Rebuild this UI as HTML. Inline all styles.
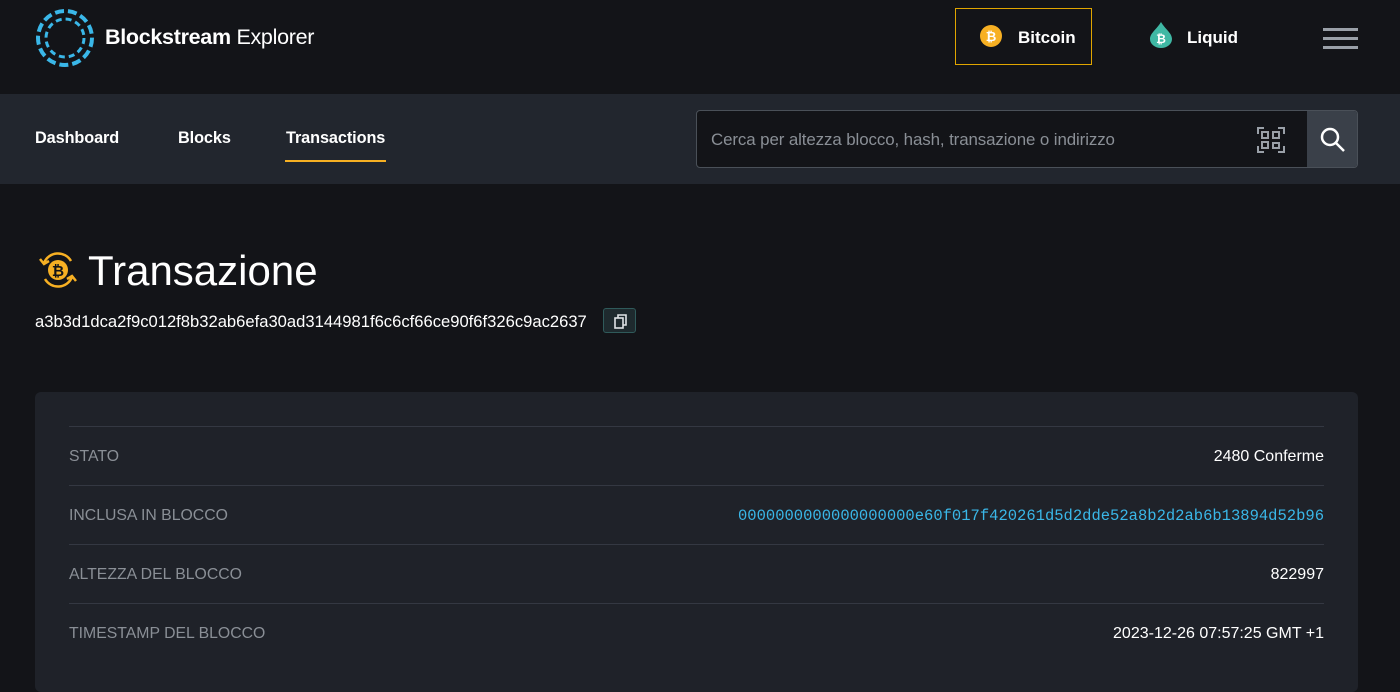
<!DOCTYPE html>
<html><head><meta charset="utf-8"><style>
*{margin:0;padding:0;box-sizing:border-box}
body{width:1400px;height:662px;overflow:hidden;background:#131418;font-family:"Liberation Sans",sans-serif;color:#fff}
.top{height:94px;position:relative;background:#131418}
.logo{position:absolute;left:35px;top:8px}
.brand{position:absolute;left:105px;top:25px;font-size:21.5px;letter-spacing:-0.3px}
.btc{position:absolute;left:955px;top:8px;width:137px;height:57px;border:1.5px solid #e0a500}
.net{position:absolute;font-weight:bold;font-size:17px;top:28px}
.burger{position:absolute;left:1323px;top:28px;width:35px}
.burger div{height:3px;background:#9aa0a8;margin-bottom:6px}
.nav{height:90px;background:#22262e;position:relative}
.nav a{position:absolute;top:35px;font-weight:bold;font-size:16.3px;color:#fff;letter-spacing:-0.1px}
.search{position:absolute;left:696px;top:16px;width:662px;height:58px;border:1px solid #4a5058;border-radius:4px;background:#131418;overflow:hidden}
.search span{position:absolute;left:14px;top:19px;color:#8a8f96;font-size:16.9px;letter-spacing:-0.1px}
.sbtn{position:absolute;right:0;top:0;width:50px;height:58px;background:#3a4049}
h1{position:absolute;left:88px;top:247px;font-size:42px;font-weight:normal}
.hash{position:absolute;left:35px;top:312px;font-size:16.6px}
.copy{position:absolute;left:603px;top:308px;width:33px;height:25px;border:1px solid #2f5a5a;border-radius:3px;background:#1e2a2e}
.card{position:absolute;left:35px;top:392px;width:1323px;height:300px;background:#1f2229;border-radius:6px}
.row{position:absolute;left:34px;width:1255px;height:59px;border-top:1px solid #343842}
.row .k{position:absolute;left:0;top:21px;color:#8a8f96;font-size:15.8px}
.row .v{position:absolute;right:0;top:21px;font-size:16px}
</style></head><body>
<div class="top">
<svg class="logo" width="60" height="60" viewBox="0 0 60 60" fill="none" stroke="#3ab7e8" stroke-width="4" stroke-dasharray="9 4"><circle cx="30" cy="30" r="27"/><circle cx="30" cy="30" r="19" stroke-width="3" stroke-dasharray="6 4"/></svg>
<div class="brand"><b>Blockstream</b> Explorer</div>
<div class="btc"></div>
<svg style="position:absolute;left:980px;top:25px" width="22" height="22"><circle cx="11" cy="11" r="11" fill="#f7b023"/><text x="11" y="16" font-size="13" font-weight="bold" fill="#fff" text-anchor="middle" font-family="Liberation Sans">₿</text></svg>
<div class="net" style="left:1018px">Bitcoin</div>
<svg style="position:absolute;left:1150px;top:22px" width="22" height="26"><path d="M11 0 C15 7 22 11 22 17 A11 9 0 0 1 0 17 C0 11 7 7 11 0Z" fill="#3fb8a4"/><text x="11" y="21" font-size="12" font-weight="bold" fill="#fff" text-anchor="middle" font-family="Liberation Sans">₿</text></svg>
<div class="net" style="left:1187px">Liquid</div>
<div class="burger"><div></div><div></div><div></div></div>
</div>
<div class="nav">
<a style="left:35px">Dashboard</a><a style="left:178px">Blocks</a><a style="left:286px">Transactions</a>
<div style="position:absolute;left:285px;top:66px;width:101px;height:2px;background:#f7b023"></div>
<div class="search"><span>Cerca per altezza blocco, hash, transazione o indirizzo</span>
<svg style="position:absolute;left:560px;top:16px" width="28" height="26" fill="none" stroke="#9aa0a8" stroke-width="2"><rect x="5" y="5" width="6" height="6"/><rect x="16" y="5" width="6" height="6"/><rect x="5" y="15" width="6" height="6"/><path d="M16 16h6v5h-6zM1 7V1h6M21 1h6v6M1 19v6h6M27 19v6h-6"/></svg>
<div class="sbtn"><svg style="position:absolute;left:12px;top:15px" width="28" height="28" fill="none" stroke="#fff" stroke-width="2.5"><circle cx="11" cy="11" r="8"/><path d="M17 17l8 8"/></svg></div>
</div>
</div>
<svg style="position:absolute;left:38px;top:251px" width="40" height="38" fill="none" stroke="#f7b023" stroke-width="2.5"><path d="M6 12 A15 15 0 0 1 33 10 M34 26 A15 15 0 0 1 7 28"/><path d="M2 8l4 5 5-3M38 30l-4-5-5 3"/><circle cx="20" cy="19" r="10" stroke="none" fill="#f7b023"/><text x="20" y="25" font-size="15" font-weight="bold" fill="#131418" stroke="none" text-anchor="middle" font-family="Liberation Sans">₿</text></svg>
<h1>Transazione</h1>
<div class="hash">a3b3d1dca2f9c012f8b32ab6efa30ad3144981f6c6cf66ce90f6f326c9ac2637</div>
<div class="copy"><svg style="position:absolute;left:10px;top:5px" width="13" height="15" fill="none" stroke="#dfe3e6" stroke-width="1.6"><rect x="1" y="4" width="8" height="10"/><path d="M4 4V1h8v10H9"/></svg></div>
<div class="card">
<div class="row" style="top:34px"><span class="k">STATO</span><span class="v">2480 Conferme</span></div>
<div class="row" style="top:93px"><span class="k">INCLUSA IN BLOCCO</span><span class="v" style="color:#3ab7e8;font-family:'Liberation Mono',monospace;font-size:15.5px">0000000000000000000e60f017f420261d5d2dde52a8b2d2ab6b13894d52b96</span></div>
<div class="row" style="top:152px"><span class="k">ALTEZZA DEL BLOCCO</span><span class="v">822997</span></div>
<div class="row" style="top:211px"><span class="k">TIMESTAMP DEL BLOCCO</span><span class="v">2023-12-26 07:57:25 GMT +1</span></div>
</div>
</body></html>
